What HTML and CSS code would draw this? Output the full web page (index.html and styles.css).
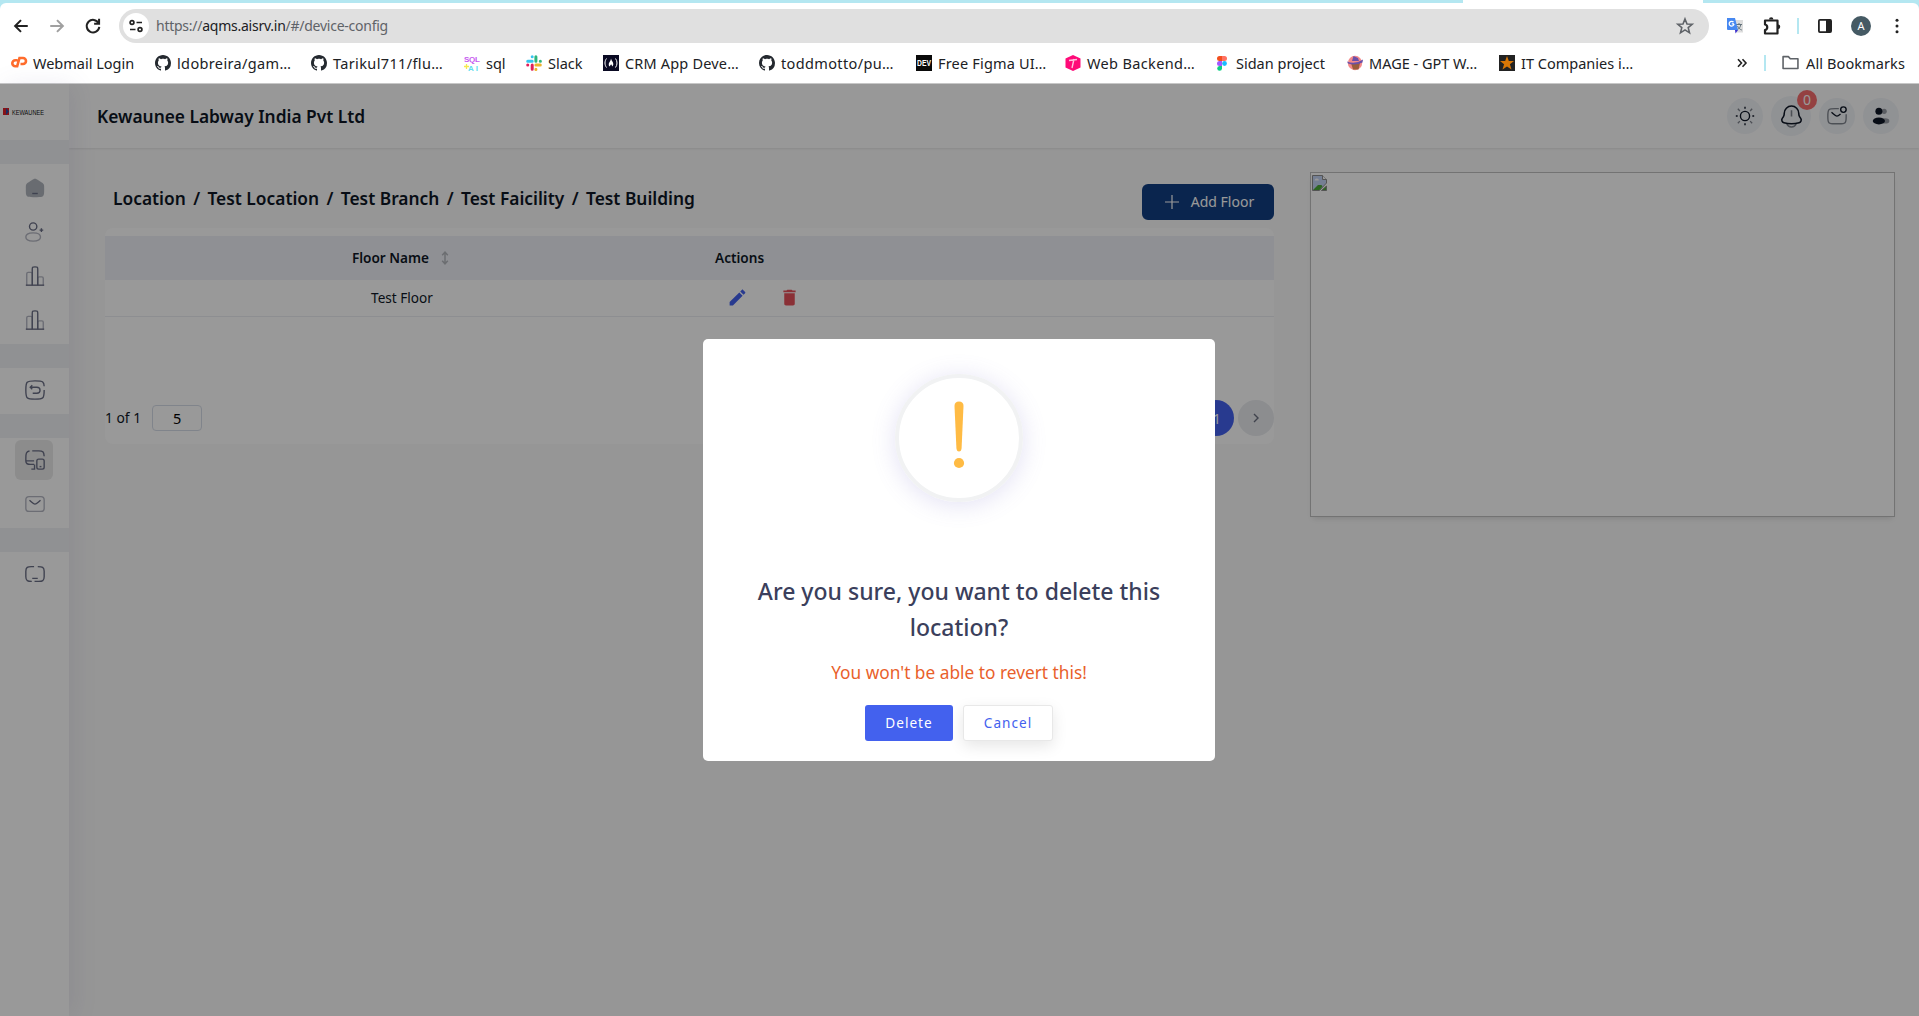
FILE: index.html
```
<!DOCTYPE html>
<html lang="en">
<head>
<meta charset="utf-8">
<title>Device Config</title>
<link rel="stylesheet" href="styles.css">
</head>
<body>
<svg class="defs" aria-hidden="true">
  <symbol id="github" viewBox="0 0 16 16"><path fill="#24292f" d="M8 0C3.58 0 0 3.58 0 8c0 3.54 2.29 6.53 5.47 7.59.4.07.55-.17.55-.38 0-.19-.01-.82-.01-1.49-2.01.37-2.53-.49-2.69-.94-.09-.23-.48-.94-.82-1.13-.28-.15-.68-.52-.01-.53.63-.01 1.08.58 1.23.82.72 1.21 1.87.87 2.33.66.07-.52.28-.87.51-1.07-1.78-.2-3.64-.89-3.64-3.95 0-.87.31-1.59.82-2.15-.08-.2-.36-1.02.08-2.12 0 0 .67-.21 2.2.82.64-.18 1.32-.27 2-.27s1.36.09 2 .27c1.53-1.04 2.2-.82 2.2-.82.44 1.1.16 1.92.08 2.12.51.56.82 1.27.82 2.15 0 3.07-1.87 3.75-3.65 3.95.29.25.54.73.54 1.48 0 1.07-.01 1.93-.01 2.2 0 .21.15.46.55.38A8.01 8.01 0 0 0 16 8c0-4.42-3.58-8-8-8z"/></symbol>
  <symbol id="chart" viewBox="0 0 24 24"><path d="M22 22H2" /><path opacity=".5" d="M21 22V14.5C21 13.67 20.33 13 19.5 13H16.5C15.67 13 15 13.67 15 14.5V22M9 22V9.500C9 8.670 8.330 8 7.500 8H4.500C3.670 8 3 8.670 3 9.500V22"/><path d="M15 22V5C15 3.586 15 2.879 14.561 2.439C14.121 2 13.414 2 12 2C10.586 2 9.879 2 9.439 2.439C9 2.879 9 3.586 9 5V22"/></symbol>
</svg>

<header class="browser">
  <div class="tabstrip"><span class="active-tab"></span></div>
  <div class="toolbar">
    <svg class="nav-icon" viewBox="0 0 16 16"><path d="M14 8H3M8 2.800L2.800 8L8 13.200"/></svg>
    <svg class="nav-icon muted" viewBox="0 0 16 16"><path d="M2 8H13M8 2.800L13.200 8L8 13.200"/></svg>
    <svg class="nav-icon" viewBox="0 0 16 16"><path d="M13 5.500A5.600 5.600 0 1 0 13.600 8.800M13.400 1.500V6H9"/></svg>
    <div class="omnibox">
      <span class="site-info"><svg width="16" height="16" viewBox="0 0 16 16" fill="none" stroke="#222" stroke-width="1.700"><circle cx="4" cy="4.500" r="1.900"/><path d="M8.500 4.500H14M2 11.500H7.500"/><circle cx="12" cy="11.500" r="1.900"/></svg></span>
      <span class="url">https://<b>aqms.aisrv.in</b>/#/device-config</span>
      <svg class="star" width="18" height="18" viewBox="0 0 18 18"><path d="M9 2L11 7L16.200 7.300L12.200 10.600L13.500 15.800L9 12.900L4.500 15.800L5.800 10.600L1.800 7.300L7 7Z" fill="none" stroke="#5f6368" stroke-width="1.600"/></svg>
    </div>
    <div class="extensions">
      <svg width="18" height="18" viewBox="0 0 18 18"><path d="M7 3H17V15.500H10Z" fill="#ddd"/><path d="M10 7.500H16M13 6V7.500M11 13C13 12 14.500 10 14.800 7.500M11.500 9C12.500 11 14 12.500 15.800 13" stroke="#62727b" fill="none"/><path d="M1 1H9L12 13H2Q1 13 1 12Z" fill="#4688f1"/><path d="M9 13H12L9.500 16.500Z" fill="#3a2fd0"/><path d="M8 6.800H5.800M7.500 5.200A2.400 2.400 0 1 0 8 7" stroke="#fff" stroke-width="1.300" fill="none"/></svg>
      <svg width="18" height="18" viewBox="0 0 18 18"><path d="M2 3.500H14.500V16.500H2V13C5 12.500 5 8 2 7.500Z" fill="none" stroke="#222" stroke-width="2.200" stroke-linejoin="round"/><path d="M6 2.500A2.200 2.200 0 0 1 10.400 2.500ZM15 7.500A2.200 2.200 0 0 1 15 12Z" fill="#222"/></svg>
      <i class="divider"></i>
      <svg width="16" height="16" viewBox="0 0 16 16"><rect x="1.900" y="1.900" width="12.200" height="12.200" rx="1" fill="none" stroke="#222" stroke-width="1.800"/><path d="M9 2H14V14H9Z" fill="#222"/></svg>
      <span class="profile">A</span>
      <svg class="kebab" width="6" height="18" viewBox="0 0 6 18" fill="#222"><circle cx="3" cy="3.300" r="1.500"/><circle cx="3" cy="9" r="1.500"/><circle cx="3" cy="14.700" r="1.500"/></svg>
    </div>
  </div>
  <nav class="bookmarks">
    <div class="bookmark-list">
      <span class="bookmark"><svg viewBox="0 0 16 16" fill="none" stroke="#ff6c2c" stroke-width="2.600"><path d="M6.500 5.200H4.300A3 3 0 0 0 4.300 11.200H6.200L8.500 3H12A3 3 0 0 1 12 9H9.500"/></svg>Webmail Login</span>
      <span class="bookmark wider"><svg><use href="#github"/></svg>ldobreira/gam…</span>
      <span class="bookmark wider"><svg><use href="#github"/></svg>Tarikul711/flu…</span>
      <span class="bookmark"><svg viewBox="0 0 16 16"><text x="0" y="7" class="sql-a" textLength="16">SQL</text><text x="4" y="15.500" class="sql-b" textLength="10">AI</text><path d="M2.500 9V14M0 11.500H5" stroke="#f5e94d" stroke-width="1.300"/></svg>sql</span>
      <span class="bookmark"><svg viewBox="0 0 16 16" fill="none" stroke-width="3" stroke-linecap="round"><path stroke="#36c5f0" d="M6.200 1.700V1.800M1.700 6.200H6.200"/><path stroke="#2eb67d" d="M9.900 1.700V6.200M14.300 6.200H14.400"/><path stroke="#ecb22e" d="M9.900 9.900H14.300M9.900 14.300V14.400"/><path stroke="#e01e5a" d="M6.200 9.900V14.300M1.700 9.900H1.800"/></svg>Slack</span>
      <span class="bookmark wide"><svg viewBox="0 0 16 16"><path fill="#0a0a23" d="M0 0H16V16H0Z"/><path d="M3.500 3.500C1.500 6 1.500 10 3.500 12.500M12.500 3.500C14.500 6 14.500 10 12.500 12.500" stroke="#fff" fill="none"/><path d="M8 3.500C8.500 6 10.500 7 10.300 9.500Q10 11 9 11.500C9 10 8.500 9.500 8 9.500Q7 10 7 11.500Q5.500 11 5.700 9C6 7 7.800 6 8 3.500Z" fill="#fff"/></svg>CRM App Deve…</span>
      <span class="bookmark wider"><svg><use href="#github"/></svg>toddmotto/pu…</span>
      <span class="bookmark wide"><svg viewBox="0 0 16 16"><path fill="#0a0a0a" d="M0 0H16V16H0Z"/><text x="1" y="11.200" class="dev" textLength="14" lengthAdjust="spacingAndGlyphs">DEV</text></svg>Free Figma UI…</span>
      <span class="bookmark wider"><svg viewBox="0 0 16 16"><path fill="#ff0a78" d="M8 0L15.500 3.500V12.500L8 16L.5 12.500V3.500Z"/><path d="M4 5.500L12 4.500M9 4L7 13" stroke="#ffc0dc" stroke-width="1.400"/></svg>Web Backend…</span>
      <span class="bookmark"><svg viewBox="0 0 16 16"><path fill="#f24e1e" d="M8 1H5.500A2.400 2.400 0 0 0 5.500 6H8Z"/><path fill="#ff7262" d="M8 1H10.500A2.400 2.400 0 0 1 10.500 6H8Z"/><path fill="#a259ff" d="M8 6H5.500A2.400 2.400 0 0 0 5.500 11H8Z"/><circle cx="10.500" cy="8.500" r="2.400" fill="#1abcfe"/><path fill="#0acf83" d="M8 11H5.500A2.400 2.400 0 1 0 8 13.500Z"/></svg>Sidan project</span>
      <span class="bookmark"><svg viewBox="0 0 16 16"><circle cx="8" cy="8" r="7.200" fill="#f58a8a"/><path fill="#9b5d3b" d="M4 8H13L11.500 14.500H6Z"/><path fill="#6b50a8" d="M0 6.500Q8 10 16 4.500L15.500 7.500Q8 11 1 8.500ZM5 6L6.500 1L11 3L12 6Z"/></svg>MAGE - GPT W…</span>
      <span class="bookmark"><svg viewBox="0 0 16 16"><path fill="#222" d="M0 0H16V16H0Z"/><path fill="#d97706" d="M8 1L9.800 6H15L10.900 9.200L12.500 14.500L8 11.400L3.500 14.500L5.100 9.200L1 6H6.200Z"/></svg>IT Companies i…</span>
    </div>
    <svg class="more" width="10" height="10" viewBox="0 0 10 10"><path d="M1 1.200L4.500 5L1 8.800M5.500 1.200L9 5L5.500 8.800" fill="none" stroke="#222" stroke-width="1.600"/></svg>
    <i class="divider"></i>
    <span class="bookmark all"><svg viewBox="0 0 16 16"><path d="M1 2.500H6L7.800 4.500H15V13.700H1Z" fill="none" stroke="#5f6368" stroke-width="1.500" stroke-linejoin="round"/></svg>All Bookmarks</span>
  </nav>
</header>

<div class="app">
  <aside class="sidebar">
    <div class="brand"><svg width="42" height="10" viewBox="0 0 42 10"><path fill="#e02028" d="M0 1H6V8H0Z"/><path fill="#2a4fa8" d="M3 1L6 4.500L3 8Z"/><text x="9" y="8" class="brand-text" textLength="32" lengthAdjust="spacingAndGlyphs">KEWAUNEE</text></svg></div>
    <div class="menu-group">
      <a><svg viewBox="0 0 24 24"><path class="solid" opacity=".5" d="M2 12.204C2 9.915 2 8.771 2.519 7.823C3.038 6.874 3.987 6.286 5.884 5.108L7.884 3.867C9.889 2.622 10.892 2 12 2C13.108 2 14.111 2.622 16.116 3.867L18.116 5.108C20.013 6.286 20.962 6.874 21.481 7.823C22 8.771 22 9.915 22 12.204V13.725C22 17.626 22 19.576 20.828 20.788C19.657 22 17.771 22 14 22H10C6.229 22 4.343 22 3.172 20.788C2 19.576 2 17.626 2 13.725Z"/><path d="M9 18H15"/></svg></a>
      <a><svg viewBox="0 0 24 24"><circle cx="10" cy="6" r="4"/><path opacity=".5" d="M18 17.500C18 19.985 16.500 22 10 22C3.500 22 2 19.985 2 17.500C2 15.015 4 13 10 13C16 13 18 15.015 18 17.500Z"/><path d="M21 10H19M19 10H17M19 10V8M19 10V12"/></svg></a>
      <a><svg><use href="#chart"/></svg></a>
      <a><svg><use href="#chart"/></svg></a>
    </div>
    <div class="menu-group">
      <a><svg viewBox="0 0 24 24"><path d="M22 8C21.900 5.700 21.700 4.300 20.500 3.400C19 2 16.700 2 12 2C7.300 2 5 2 3.500 3.500C2 5 2 7.300 2 12C2 16.700 2 19 3.500 20.500C5 22 7.300 22 12 22C16.700 22 19 22 20.500 20.500C22 19 22 16.700 22 12"/><path d="M9.500 15.500H14C15.900 15.500 17.500 14.200 17.500 12.300C17.500 10.400 15.900 9 14 9H7M9 6.800L6.800 9L9 11.200"/></svg></a>
    </div>
    <div class="menu-group">
      <a class="active"><svg viewBox="0 0 24 24"><path d="M9 2H16C20.500 2 21.700 3 22 8M6 2.200C2.500 2.800 2 5 2 10V13C2 15.500 3.500 16.800 7 16.800H11M2 13H11M8 22H11.500V17"/><rect x="14" y="11" width="8" height="11" rx="2"/><path d="M17 19.200H19"/></svg></a>
      <a><svg viewBox="0 0 24 24"><rect opacity=".5" x="2" y="4" width="20" height="16" rx="3.500"/><path d="M6 8L8.159 9.799C9.996 11.330 10.914 12.095 12 12.095C13.086 12.095 14.004 11.330 15.841 9.799L18 8"/></svg></a>
    </div>
    <div class="menu-group last">
      <a><svg viewBox="0 0 24 24"><path d="M11 4H8C4 4 2 4.500 2 9V15C2 19.500 4 20 8.500 20M15 4C20 4 22 4.300 22 9V15C22 19.500 20 20 16 20H11.500M9 16.800H15"/></svg></a>
    </div>
  </aside>

  <main class="page">
    <div class="topbar">
      <h1>Kewaunee Labway India Pvt Ltd</h1>
      <div class="tools">
        <span class="tool"><svg viewBox="0 0 24 24"><circle cx="12" cy="12" r="5"/><path d="M12 2V4M12 20V22M4 12H2M22 12H20"/><path opacity=".5" d="M19.800 4.200L17.600 6.500M4.200 4.200L6.400 6.500M6.400 17.600L4.200 19.800M19.800 19.800L17.600 17.600"/></svg></span>
        <span class="tool bell"><svg viewBox="0 0 24 24"><path d="M19 9.704V9C19 5.134 15.866 2 12 2C8.134 2 5 5.134 5 9V9.704C5 10.549 4.750 11.375 4.281 12.078L3.133 13.801C2.083 15.375 2.884 17.514 4.709 18.012C9.483 19.313 14.518 19.313 19.291 18.012C21.116 17.514 21.917 15.375 20.868 13.801L19.719 12.078C19.250 11.375 19 10.549 19 9.704Z"/><path opacity=".5" d="M7.500 19C8.155 20.748 9.922 22 12 22C14.078 22 15.845 20.748 16.500 19M12 6V12"/></svg><b class="badge">0</b></span>
        <span class="tool"><svg viewBox="0 0 24 24"><path opacity=".5" d="M22 10C22 11 22 11 22 12.500C22 16.300 22 18.200 20.800 19.300C19.700 20.500 17.800 20.500 14 20.500H10C6.200 20.500 4.300 20.500 3.200 19.300C2 18.200 2 16.300 2 12.500C2 8.700 2 6.300 3.200 5.200C4.300 4 6.200 4 10 4H14"/><path d="M6 8L8.159 9.799C9.996 11.330 10.914 12.095 12 12.095C13.086 12.095 14.004 11.330 15.841 9.799"/><circle cx="19" cy="5" r="3"/></svg></span>
        <span class="tool user"><svg viewBox="0 0 24 24"><circle cx="15" cy="6" r="3" opacity=".4"/><ellipse cx="16" cy="17" rx="5" ry="3" opacity=".4"/><circle cx="9" cy="6" r="4"/><ellipse cx="9" cy="17" rx="7" ry="4"/></svg></span>
      </div>
    </div>
    <div class="content">
      <section class="floors">
        <div class="floors-head">
          <div class="crumbs"><span>Location</span><i>/</i><span>Test Location</span><i>/</i><span>Test Branch</span><i>/</i><span>Test Faicility</span><i>/</i><span>Test Building</span></div>
          <button class="add"><svg width="14" height="14" viewBox="0 0 14 14"><path d="M7 0V14M0 7H14" stroke="#fff" stroke-width="1.200"/></svg><span>Add Floor</span></button>
        </div>
        <div class="table-card">
          <div class="row head">
            <span class="name">Floor Name<svg width="8" height="14" viewBox="0 0 8 14"><path d="M4 2V12M1.200 4.200L4 1.200L6.800 4.200M1.200 9.800L4 12.800L6.800 9.800" fill="none" stroke="#b4b7bd" stroke-width="1.500"/></svg></span>
            <span class="actions">Actions</span>
          </div>
          <div class="row">
            <span class="name">Test Floor</span>
            <span class="actions icons">
              <svg width="21" height="21" viewBox="0 0 24 24"><path fill="#4361ee" d="M3 17.250V21H6.750L17.810 9.940L14.060 6.190L3 17.250ZM20.710 7.040C21.100 6.650 21.100 6.020 20.710 5.630L18.370 3.290C17.980 2.900 17.350 2.900 16.960 3.290L15.130 5.120L18.880 8.870L20.710 7.040Z"/></svg>
              <svg width="21" height="21" viewBox="0 0 24 24"><path fill="#e7515a" d="M6 19C6 20.100 6.900 21 8 21H16C17.100 21 18 20.100 18 19V7H6V19ZM19 4H15.500L14.500 3H9.500L8.500 4H5V6H19V4Z"/></svg>
            </span>
          </div>
          <div class="pager">
            <span class="count">1 of 1</span><span class="size">5</span>
            <span class="pages"><b class="current">1</b><b class="next"><svg width="8" height="10" viewBox="0 0 8 10"><path d="M2 1L6 5L2 9" fill="none" stroke="#6b7080" stroke-width="1.400"/></svg></b></span>
          </div>
        </div>
      </section>
      <div class="plan"><svg width="16" height="16" viewBox="0 0 16 16"><path d="M.5.5H10.500L14.500 4.500V8L7.500 15.500H.5Z" fill="#c4d4f6" stroke="#8c8c8c"/><path d="M10.500.5V4.500H14.500" fill="#fff" stroke="#8c8c8c"/><path d="M2.500 5.500Q3 3 5 3.500Q7 3.500 6.800 5.500Z" fill="#fff"/><path d="M1 15L6 10H9.500L10.500 11.500L7.500 15Z" fill="#4aa836"/><path d="M9.500 15.500L14.500 11V15.500Z" fill="#4aa836" stroke="#8c8c8c"/></svg></div>
    </div>
  </main>

  <div class="overlay">
    <div class="dialog" role="dialog">
      <div class="warn-icon"><svg width="14" height="64" viewBox="0 0 14 64"><path fill="#ffbb44" d="M2.500 5Q2.500 .5 7 .5Q11.500 .5 11.500 5L9.600 47Q9.300 50.500 7 50.500Q4.700 50.500 4.400 47Z"/><circle cx="7" cy="62" r="5.100" fill="#ffbb44"/></svg></div>
      <h2>Are you sure, you want to delete this location?</h2>
      <p>You won't be able to revert this!</p>
      <div class="buttons"><button class="delete">Delete</button><button class="cancel">Cancel</button></div>
    </div>
  </div>
</div>
</body>
</html>
```
FILE: styles.css
```
* { box-sizing: border-box; }
body {
  margin: 0;
  height: 1016px;
  overflow: hidden;
  display: flex;
  flex-direction: column;
  font-family: "Noto Sans", "Open Sans", sans-serif;
  color: #0e1726;
}
svg { flex: none; display: block; overflow: visible; }
button, h1, h2, p { margin: 0; font: inherit; }
.defs { position: absolute; width: 0; height: 0; }

/* Browser chrome */
.browser { height: 84px; flex: none; background: #b4e7f1; border-bottom: 1px solid #c8c8c8; }
.tabstrip { height: 3px; background: #b4e7f1; padding-left: 1463px; }
.active-tab { display: block; width: 240px; height: 3px; background: #fff; }
.toolbar { height: 46px; display: flex; align-items: center; padding: 0 15px 0 12px; background: #fff; border-radius: 6px 6px 0 0; }
.nav-icon { width: 18px; height: 18px; margin-right: 18px; fill: none; stroke: #222; stroke-width: 1.8; }
.nav-icon.muted { stroke: #a0a0a0; }
.omnibox {
  width: 1590px; height: 34px; margin-left: -1px;
  background: #e0e0e0; border-radius: 17px;
  display: flex; align-items: center; padding: 0 15px 0 4px;
}
.site-info {
  width: 26px; height: 26px; border-radius: 50%; background: #fff;
  display: flex; align-items: center; justify-content: center;
}
.url { margin-left: 7px; padding-bottom: 1px; font-size: 14px; letter-spacing: -.25px; color: #5f6368; }
.url b { font-weight: 400; color: #202124; }
.star { margin-left: auto; }
.extensions { display: flex; align-items: center; flex: 1; margin-left: 17px; }
.extensions svg + svg { margin-left: 19px; }
.divider { display: block; width: 2px; height: 16px; background: #b4e7f1; }
.extensions .divider { margin: 0 18px 0 16px; }
.profile {
  width: 20px; height: 20px; margin: 0 auto 0 18px; border-radius: 50%;
  background: #455a64; color: #fff; font-size: 11px; line-height: 20px; text-align: center;
}
.kebab { margin-right: 4px; }
.bookmarks { height: 34px; display: flex; align-items: center; padding: 0 14px 7px 11px; background: #fff; }
.bookmark-list {
  display: grid;
  grid-template-columns: 144px 156px 153px 62px 77px 156px 157px 149px 149px 133px 152px 160px;
}
.bookmark { display: flex; align-items: center; gap: 6px; font-size: 14.5px; line-height: 20px; color: #202124; white-space: nowrap; }
.bookmark.wide { letter-spacing: .18px; }
.bookmark.wider { letter-spacing: .36px; }
.bookmark svg { width: 16px; height: 16px; }
.sql-a { font: 700 8px "Liberation Sans", sans-serif; letter-spacing: 0; fill: #c65bf0; }
.sql-b { font: 700 8px "Liberation Sans", sans-serif; letter-spacing: 0; fill: #5fe0ee; }
.dev { font: 700 9px "Liberation Sans", sans-serif; letter-spacing: 0; fill: #fff; }
.more { margin-left: 78px; }
.bookmarks > .divider { margin: 0 auto 0 17px; }
.bookmark.all { gap: 7px; letter-spacing: .1px; }
.bookmark.all svg { width: 17px; height: 17px; }

/* Application */
.app { flex: 1; min-height: 0; display: flex; position: relative; background: #fafafa; }
.sidebar {
  width: 69px; flex: none; background: #f1f2f6; z-index: 1;
  box-shadow: 5px 0 25px rgba(94, 92, 154, .1);
  display: flex; flex-direction: column; gap: 24px;
}
.brand { height: 56px; padding: 23px 0 0 3px; background: #fff; }
.brand-text { font: 400 8px "Liberation Sans", sans-serif; fill: #111; }
.menu-group { background: #fff; padding: 2px 16px 2px 15px; display: flex; flex-direction: column; gap: 4px; }
.menu-group a { height: 40px; padding-left: 1px; border-radius: 6px; display: flex; align-items: center; justify-content: center; }
.menu-group:nth-child(2) { height: 180px; padding-top: 4px; }
.menu-group:nth-child(3) { height: 46px; }
.menu-group:nth-child(4) { height: 90px; }
.menu-group.last { flex: 1; }
.menu-group svg { width: 22px; height: 22px; fill: none; stroke: #6a6e85; stroke-width: 1.5; }
.menu-group .solid { fill: #606c7c; stroke: none; }
.menu-group .active { background: #e9e9e9; }
.page { flex: 1; display: flex; flex-direction: column; }
.topbar {
  height: 64px; padding: 0 20px 0 28px; background: #fefefe; box-shadow: 0 1px 2px rgba(0, 0, 0, .09);
  display: flex; align-items: center; justify-content: space-between;
}
.topbar h1 { padding-bottom: 1px; font-size: 17.35px; font-weight: 600; }
.tools { display: flex; align-items: center; gap: 8px; }
.tool {
  width: 36px; height: 36px; border-radius: 50%; background: #f1f3f7;
  display: flex; align-items: center; justify-content: center; position: relative;
}
.tool svg { width: 22px; height: 22px; fill: none; stroke: #0e1726; stroke-width: 1.5; }
.tool.bell { width: 40px; height: 40px; }
.tool.bell svg { width: 25px; height: 25px; }
.tool.user svg { width: 21px; height: 21px; fill: #0e1726; stroke: none; }
.badge {
  position: absolute; left: 26px; top: -6px; width: 20px; height: 20px; border-radius: 50%;
  background: #f76d6d; color: #fff; font: 400 14px/19px "Noto Sans", sans-serif; text-align: center;
}
.content { display: flex; gap: 36px; align-items: flex-start; padding: 24px 24px 0 36px; }
.floors { width: 1169px; }
.floors-head { height: 56px; display: flex; justify-content: space-between; padding: 12px 0 0 8px; }
.crumbs { display: flex; gap: 7.4px; font-size: 17.35px; line-height: 28px; font-weight: 600; white-space: nowrap; }
.crumbs i { font-style: normal; }
.add {
  width: 132px; height: 36px; border: 0; border-radius: 6px; background: #123f83; color: #fff;
  display: flex; align-items: center; justify-content: center; gap: 12px; padding: 0 0 0 3px; font-size: 14px;
}
.add span { padding-bottom: 2px; }
.table-card { height: 216px; background: #fff; border-radius: 8px; padding-top: 8px; font-size: 13.6px; }
.row { height: 37px; display: flex; align-items: center; border-bottom: 1px solid #ebedf2; }
.row:not(.head) { padding-bottom: 1px; }
.row.head { height: 44px; background: #eff1f7; font-weight: 600; border: 0; padding-bottom: 1px; }
.name { width: 594px; display: flex; justify-content: center; align-items: center; gap: 12px; }
.row.head .name { padding-right: 3px; }
.actions { margin-left: 16px; }
.actions.icons { display: flex; gap: 31px; margin-left: 28px; }
.pager { display: flex; align-items: center; height: 36px; margin-top: 83px; }
.count { font-size: 13.8px; padding-bottom: 1px; }
.size {
  width: 50px; height: 26px; margin-left: 11px; border: 1px solid #d6dde8; border-radius: 4px;
  text-align: center; line-height: 24px; font-size: 14.5px; color: #000;
}
.pages { display: flex; gap: 4px; margin-left: auto; }
.pages b { width: 36px; height: 36px; border-radius: 50%; display: flex; align-items: center; justify-content: center; font-weight: 400; }
.pages .current { background: #4361ee; color: #fff; padding-left: 2px; }
.next { background: #e9ebef; }
.plan {
  width: 585px; height: 345px; border: 1px solid #c0c0c0; background: #fff; padding: 2px 1px;
  box-shadow: 0 4px 6px -3px rgba(0, 0, 0, .14);
}

/* Confirmation dialog */
.overlay {
  position: absolute; inset: 0; z-index: 2; background: rgba(0, 0, 0, .4);
  display: flex; justify-content: center; align-items: center; padding-right: 1px;
}
.dialog {
  width: 512px; height: 422px; background: #fff; border-radius: 5px;
  display: flex; flex-direction: column; align-items: center; text-align: center; padding-top: 35px;
}
.warn-icon {
  width: 128px; height: 128px; border: 4px solid #f1f2f3; border-radius: 50%;
  box-shadow: 0 3px 25px rgba(113, 106, 202, .2);
  display: flex; justify-content: center; padding-top: 23px;
}
.dialog h2 { width: 430px; margin-top: 71px; font-size: 23px; line-height: 36px; font-weight: 500; color: #3b3f5c; }
.dialog p { margin-top: 15px; font-size: 17.3px; line-height: 26px; color: #e95f2b; }
.buttons { display: flex; gap: 10px; margin-top: 19px; }
.buttons button { height: 36px; border-radius: 3px; padding: 0 0 1px; font-size: 13.6px; letter-spacing: 1px; }
.delete { width: 88px; border: 0; background: #4361ee; color: #fff; }
.cancel { width: 90px; border: 1px solid #e8e8e8; background: #fff; color: #4361ee; box-shadow: 0 5px 15px rgba(0, 0, 0, .1); }
```
